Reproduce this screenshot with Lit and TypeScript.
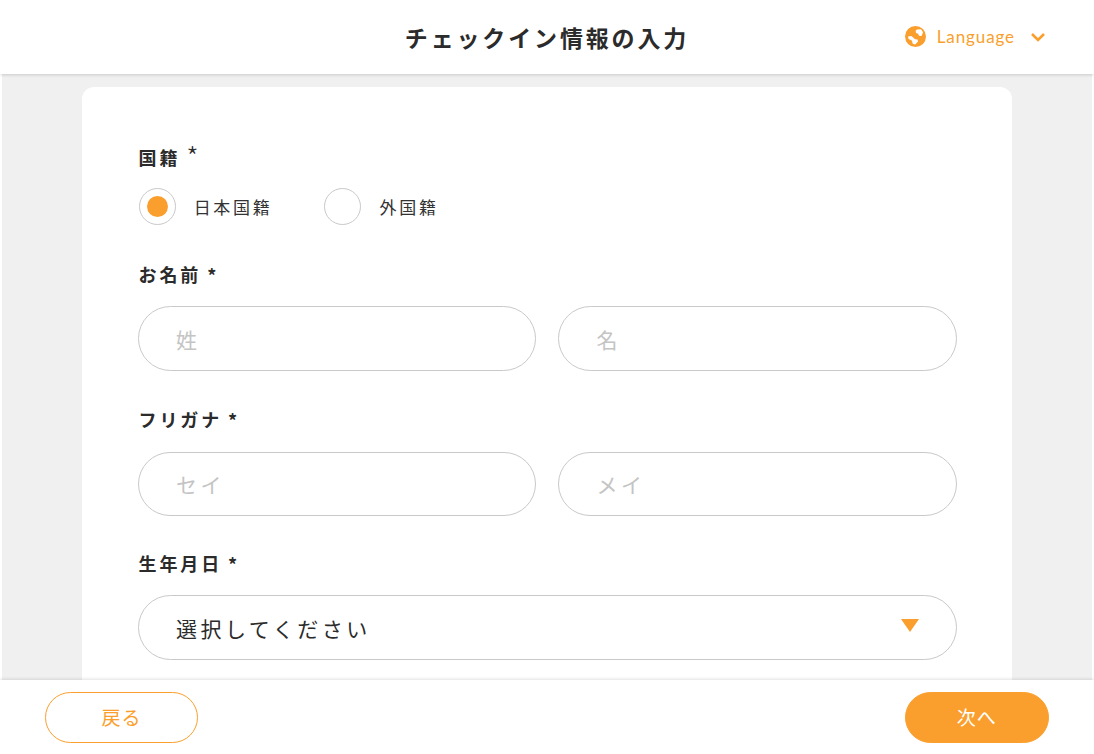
import { LitElement, html, css } from "lit";
import { customElement } from "lit/decorators.js";

@customElement("app-root")
export class AppRoot extends LitElement {
  static styles = css`
    :host { display: flex; flex-direction: column; height: 754px; width: 1094px; overflow: hidden; background: #fff; font-family: Lato, "Noto Sans CJK JP", sans-serif; color: #333; padding: 0 2.5px 0 2.4px; box-sizing: border-box; }
    * { box-sizing: border-box; }
    header { flex: none; height: 74px; margin: 0 -2.5px 0 -2.4px; background: #fff; box-shadow: 0 1px 3px rgba(0,0,0,.16); display: grid; grid-template-columns: 1fr auto 1fr; align-items: center; position: relative; z-index: 1; }
    h1 { grid-column: 2; margin: 2px 0 0; font-size: 23px; font-weight: 700; letter-spacing: 2.85px; color: #2b2b2b; line-height: 1; }
    .lang { grid-column: 3; justify-self: end; margin-right: 48px; display: flex; align-items: center; color: #fa9f2d; font-size: 17px; letter-spacing: .9px; margin-top: -1px; }
    .lang .label { margin: 0 15px 0 11px; }
    main { flex: 1; min-height: 0; background: #f0f0f0; padding: 13px 79.6px 0; overflow: hidden; }
    .card { background: #fff; border-radius: 12px 12px 0 0; height: 100%; padding: 59px 55px 0 56px; }
    .field-label { display: flex; height: 24px; font-size: 18px; font-weight: 700; letter-spacing: 2.9px; color: #2b2b2b; line-height: 24px; margin: 0 0 0 .5px; }
    .star { margin-left: 6px; font-family: "Noto Sans CJK JP", sans-serif; }
    .star.thin { font-weight: 300; font-size: 28px; line-height: 24px; margin-left: 6px; margin-top: -2px; }
    .radios { display: flex; align-items: center; margin: 18px 0 0 .7px; height: 37px; }
    .radio { display: flex; align-items: center; font-size: 17px; letter-spacing: 2.7px; }
    .radio + .radio { margin-left: 52px; }
    .circle { width: 37px; height: 37px; border-radius: 50%; border: 1px solid #c9c9c9; margin-right: 18px; display: flex; align-items: center; justify-content: center; }
    .dot { width: 21px; height: 21px; border-radius: 50%; background: #fa9f2d; }
    .row { display: flex; gap: 22px; margin-top: 19px; }
    .input { flex: 1; height: 65px; border: 1px solid #c9c9c9; border-radius: 32.5px; padding-left: 37px; display: flex; align-items: center; font-size: 21px; letter-spacing: 3.5px; color: #c4c4c4; }
    .select { color: #2b2b2b; justify-content: space-between; padding-right: 37px; }
    .select svg { display: block; margin-top: -4px; }
    .group { margin-top: 37px; }
    .name { margin-top: 38px; }
    .kana .row { margin-top: 20px; }
    .kana .input { height: 64px; }
    .birth { margin-top: 36px; }
    footer { flex: none; height: 74px; margin: 0 -2.5px 0 -2.4px; background: #fff; box-shadow: 0 -1px 3px rgba(0,0,0,.12); display: flex; justify-content: space-between; align-items: center; padding: 0 45px; position: relative; z-index: 1; }
    .btn { height: 51px; border-radius: 25.5px; border: 1px solid #fa9f2d; display: flex; align-items: center; justify-content: center; font-size: 19px; letter-spacing: 1px; color: #fa9f2d; background: #fff; padding-bottom: 2px; }
    .back { width: 153px; }
    .next { width: 144.5px; background: #fa9f2d; color: #fff; }
  `;

  render() {
    return html`
      <header>
        <h1>チェックイン情報の入力</h1>
        <div class="lang">
          <svg width="21" height="21" viewBox="0 0 21 21"><circle cx="10.5" cy="10.5" r="10.5" fill="#fa9f2d"/><path d="M12 3.4l4-.2 2 3-1.4 3.8-2.6-.2-.8-2-2.2-.8-.4-2.2zM3 10.6l3.4-.6 3.8 3.2 2.4.4.4 1.8-2.8 3-2.4-.6-1-3.4L3.6 13z" fill="#fff"/></svg>
          <span class="label">Language</span>
          <svg width="16" height="10" viewBox="0 0 16 10"><path d="M2 2l6 6 6-6" fill="none" stroke="#fa9f2d" stroke-width="2.6"/></svg>
        </div>
      </header>
      <main>
        <div class="card">
          <div class="field-label">国籍<span class="star thin">*</span></div>
          <div class="radios">
            <div class="radio"><span class="circle"><span class="dot"></span></span>日本国籍</div>
            <div class="radio"><span class="circle"></span>外国籍</div>
          </div>
          <div class="group name">
            <div class="field-label">お名前<span class="star">*</span></div>
            <div class="row"><div class="input">姓</div><div class="input">名</div></div>
          </div>
          <div class="group kana">
            <div class="field-label">フリガナ<span class="star">*</span></div>
            <div class="row"><div class="input">セイ</div><div class="input">メイ</div></div>
          </div>
          <div class="group birth">
            <div class="field-label">生年月日<span class="star">*</span></div>
            <div class="row"><div class="input select">選択してください
              <svg width="18" height="13" viewBox="0 0 18 13"><path d="M0 0h18l-9 13z" fill="#fa9f2d"/></svg></div></div>
          </div>
        </div>
      </main>
      <footer>
        <div class="btn back">戻る</div>
        <div class="btn next">次へ</div>
      </footer>
    `;
  }
}
